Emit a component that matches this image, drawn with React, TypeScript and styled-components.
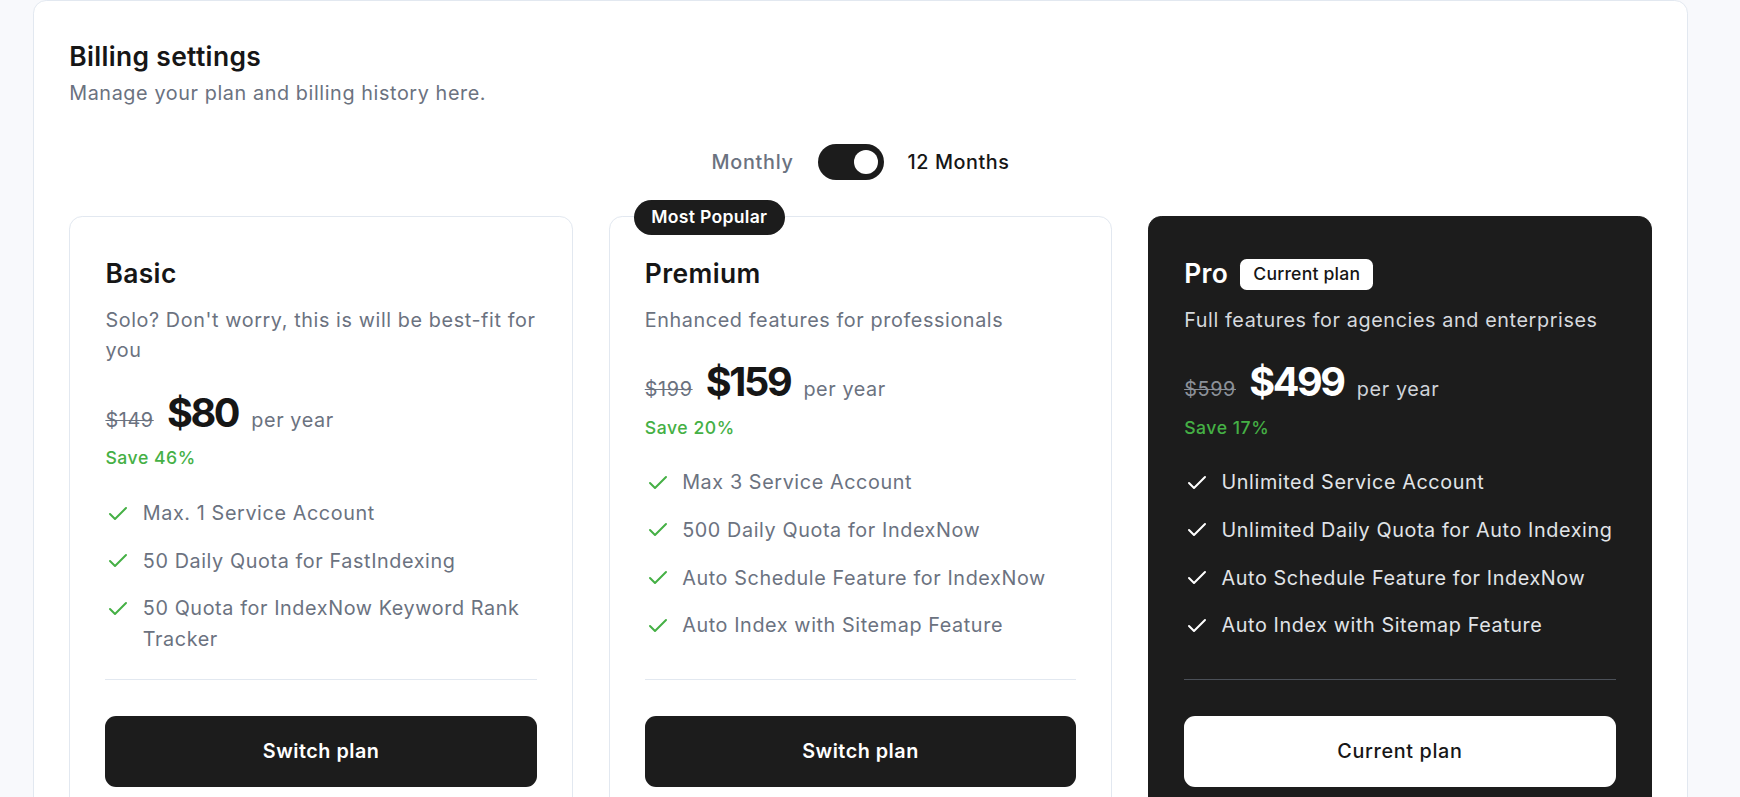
import React from "react";
import styled, { createGlobalStyle, css } from "styled-components";

const GlobalStyle = createGlobalStyle`
  * { box-sizing: border-box; }
  html, body { margin: 0; padding: 0; }
  body {
    background: #f8f9fc;
    font-family: Inter, "Noto Sans", "Liberation Sans", sans-serif;
    color: #161616;
    -webkit-font-smoothing: antialiased;
  }
`;

const DARK = "#1c1c1c";
const GRAY = "#6b7280";
const GREEN = "#45b045";
const BORDER = "#e2e8f0";

const Page = styled.div`
  padding-left: 33px;
  width: 1688px;
`;

const Panel = styled.section`
  background: #ffffff;
  border: 1px solid ${BORDER};
  border-radius: 13.2px;
  padding: 35.8px 35.2px 35.2px;
`;

const Title = styled.h1`
  margin: 0;
  font-size: 26.4px;
  line-height: 39.6px;
  font-weight: 600;
  letter-spacing: 0.35px;
  color: #161616;
`;

const Subtitle = styled.p`
  margin: 1.5px 0 0;
  font-size: 19.8px;
  line-height: 30.8px;
  letter-spacing: 0.6px;
  color: ${GRAY};
`;

const ToggleRow = styled.div`
  margin-top: 35.2px;
  display: flex;
  align-items: center;
  justify-content: center;
  gap: 24px;
`;

const ToggleLabel = styled.span<{ $active?: boolean }>`
  font-size: 19.8px;
  line-height: 30.8px;
  font-weight: 500;
  letter-spacing: ${(p) => (p.$active ? "0.55px" : "0.7px")};
  color: ${(p) => (p.$active ? "#161616" : GRAY)};
`;

const Switch = styled.button`
  width: 66px;
  height: 36.5px;
  border: none;
  border-radius: 999px;
  background: ${DARK};
  padding: 0 5.5px;
  display: flex;
  align-items: center;
  justify-content: flex-end;
  cursor: pointer;
`;

const Knob = styled.span`
  width: 24.5px;
  height: 24.5px;
  border-radius: 50%;
  background: #ffffff;
`;

const PlanGrid = styled.div`
  margin-top: 35.5px;
  display: grid;
  grid-template-columns: repeat(3, 1fr);
  gap: 35.5px;
`;

const Card = styled.div<{ $dark?: boolean }>`
  position: relative;
  display: flex;
  flex-direction: column;
  border: 1px solid ${(p) => (p.$dark ? DARK : BORDER)};
  border-radius: 13.2px;
  background: ${(p) => (p.$dark ? DARK : "#ffffff")};
  padding: 37.6px 35.2px 35.2px;
`;

const PopularBadge = styled.span`
  position: absolute;
  top: -17.2px;
  left: 24px;
  background: ${DARK};
  color: #ffffff;
  font-size: 17.6px;
  line-height: 26.4px;
  font-weight: 600;
  letter-spacing: 0.3px;
  padding: 4.4px 17.6px;
  border-radius: 999px;
`;

const CardHead = styled.div`
  display: flex;
  align-items: center;
  gap: 12px;
`;

const PlanName = styled.h2<{ $dark?: boolean }>`
  margin: 0;
  font-size: 26.4px;
  line-height: 39.6px;
  font-weight: 600;
  letter-spacing: 0.4px;
  color: ${(p) => (p.$dark ? "#ffffff" : "#161616")};
`;

const CurrentTag = styled.span`
  background: #ffffff;
  color: #161616;
  font-size: 17.6px;
  line-height: 26.4px;
  font-weight: 500;
  letter-spacing: 0.2px;
  padding: 2.2px 13px;
  border-radius: 6.6px;
`;

const Description = styled.p<{ $dark?: boolean }>`
  margin: 10.6px 0 0;
  font-size: 19.8px;
  line-height: 30.8px;
  letter-spacing: 0.6px;
  color: ${(p) => (p.$dark ? "#d6d9de" : GRAY)};
`;

const PriceRow = styled.div`
  margin-top: 24.4px;
  display: flex;
  align-items: baseline;
  gap: 13.2px;
`;

const OldPrice = styled.span<{ $dark?: boolean }>`
  font-size: 19.8px;
  line-height: 30.8px;
  letter-spacing: 0.65px;
  text-decoration: line-through;
  color: ${(p) => (p.$dark ? "#8b9098" : GRAY)};
`;

const Price = styled.span<{ $dark?: boolean }>`
  font-size: 39.6px;
  line-height: 44px;
  font-weight: 700;
  letter-spacing: -2.4px;
  color: ${(p) => (p.$dark ? "#ffffff" : "#161616")};
`;

const Period = styled.span<{ $dark?: boolean }>`
  font-size: 19.8px;
  line-height: 30.8px;
  letter-spacing: 0.6px;
  color: ${(p) => (p.$dark ? "#cfd3d9" : GRAY)};
`;

const Save = styled.div`
  margin-top: 10px;
  font-size: 17.6px;
  line-height: 26.4px;
  font-weight: 500;
  letter-spacing: 0.55px;
  color: ${GREEN};
`;

const FeatureList = styled.ul`
  list-style: none;
  margin: 26.4px 0 0;
  padding: 0;
  display: flex;
  flex-direction: column;
  gap: 16.8px;
  flex: 1;
`;

const FeatureItem = styled.li<{ $dark?: boolean }>`
  display: flex;
  align-items: flex-start;
  gap: 12.4px;
  font-size: 19.8px;
  line-height: 30.8px;
  letter-spacing: 0.6px;
  color: ${(p) => (p.$dark ? "#e1e4e8" : GRAY)};
`;

const IconBox = styled.span`
  flex: none;
  height: 30.8px;
  display: flex;
  align-items: center;
  padding-left: 1px;
`;

const Divider = styled.hr<{ $dark?: boolean }>`
  margin: 24.4px 0 0;
  border: none;
  height: 1px;
  background: ${(p) => (p.$dark ? "#4b5058" : BORDER)};
`;

const PlanButton = styled.button<{ $variant: "dark" | "light" }>`
  margin-top: 35.5px;
  height: 71px;
  border: none;
  border-radius: 11px;
  font-family: inherit;
  font-size: 19.8px;
  line-height: 30.8px;
  cursor: pointer;
  ${(p) =>
    p.$variant === "dark"
      ? css`
          background: ${DARK};
          color: #ffffff;
          font-weight: 600;
          letter-spacing: 0.5px;
        `
      : css`
          background: #ffffff;
          color: #161616;
          font-weight: 500;
          letter-spacing: 0.65px;
        `}
`;

const CheckIcon = ({ color }: { color: string }) => (
  <svg width="24" height="24" viewBox="0 0 24 24" fill="none" stroke={color} strokeWidth="2" strokeLinecap="round" strokeLinejoin="round">
    <path d="M20 6 9 17l-5-5" />
  </svg>
);

type Plan = {
  name: string;
  description: string;
  oldPrice: string;
  price: string;
  save: string;
  features: string[];
  dark?: boolean;
  popular?: boolean;
  current?: boolean;
};

const plans: Plan[] = [
  {
    name: "Basic",
    description: "Solo? Don't worry, this is will be best-fit for you",
    oldPrice: "$149",
    price: "$80",
    save: "Save 46%",
    features: [
      "Max. 1 Service Account",
      "50 Daily Quota for FastIndexing",
      "50 Quota for IndexNow Keyword Rank Tracker",
    ],
  },
  {
    name: "Premium",
    description: "Enhanced features for professionals",
    oldPrice: "$199",
    price: "$159",
    save: "Save 20%",
    popular: true,
    features: [
      "Max 3 Service Account",
      "500 Daily Quota for IndexNow",
      "Auto Schedule Feature for IndexNow",
      "Auto Index with Sitemap Feature",
    ],
  },
  {
    name: "Pro",
    description: "Full features for agencies and enterprises",
    oldPrice: "$599",
    price: "$499",
    save: "Save 17%",
    dark: true,
    current: true,
    features: [
      "Unlimited Service Account",
      "Unlimited Daily Quota for Auto Indexing",
      "Auto Schedule Feature for IndexNow",
      "Auto Index with Sitemap Feature",
    ],
  },
];

const PlanCard = ({ plan }: { plan: Plan }) => {
  const d = plan.dark;
  return (
    <Card $dark={d}>
      {plan.popular && <PopularBadge>Most Popular</PopularBadge>}
      <CardHead>
        <PlanName $dark={d}>{plan.name}</PlanName>
        {plan.current && <CurrentTag>Current plan</CurrentTag>}
      </CardHead>
      <Description $dark={d}>{plan.description}</Description>
      <PriceRow>
        <OldPrice $dark={d}>{plan.oldPrice}</OldPrice>
        <Price $dark={d}>{plan.price}</Price>
        <Period $dark={d}>per year</Period>
      </PriceRow>
      <Save>{plan.save}</Save>
      <FeatureList>
        {plan.features.map((f) => (
          <FeatureItem key={f} $dark={d}>
            <IconBox>
              <CheckIcon color={d ? "#ffffff" : GREEN} />
            </IconBox>
            <span>{f}</span>
          </FeatureItem>
        ))}
      </FeatureList>
      <Divider $dark={d} />
      <PlanButton $variant={d ? "light" : "dark"}>
        {plan.current ? "Current plan" : "Switch plan"}
      </PlanButton>
    </Card>
  );
};

export default function App() {
  return (
    <>
      <GlobalStyle />
      <Page>
        <Panel>
          <Title>Billing settings</Title>
          <Subtitle>Manage your plan and billing history here.</Subtitle>
          <ToggleRow>
            <ToggleLabel>Monthly</ToggleLabel>
            <Switch aria-label="Billing period">
              <Knob />
            </Switch>
            <ToggleLabel $active>12 Months</ToggleLabel>
          </ToggleRow>
          <PlanGrid>
            {plans.map((p) => (
              <PlanCard key={p.name} plan={p} />
            ))}
          </PlanGrid>
        </Panel>
      </Page>
    </>
  );
}
